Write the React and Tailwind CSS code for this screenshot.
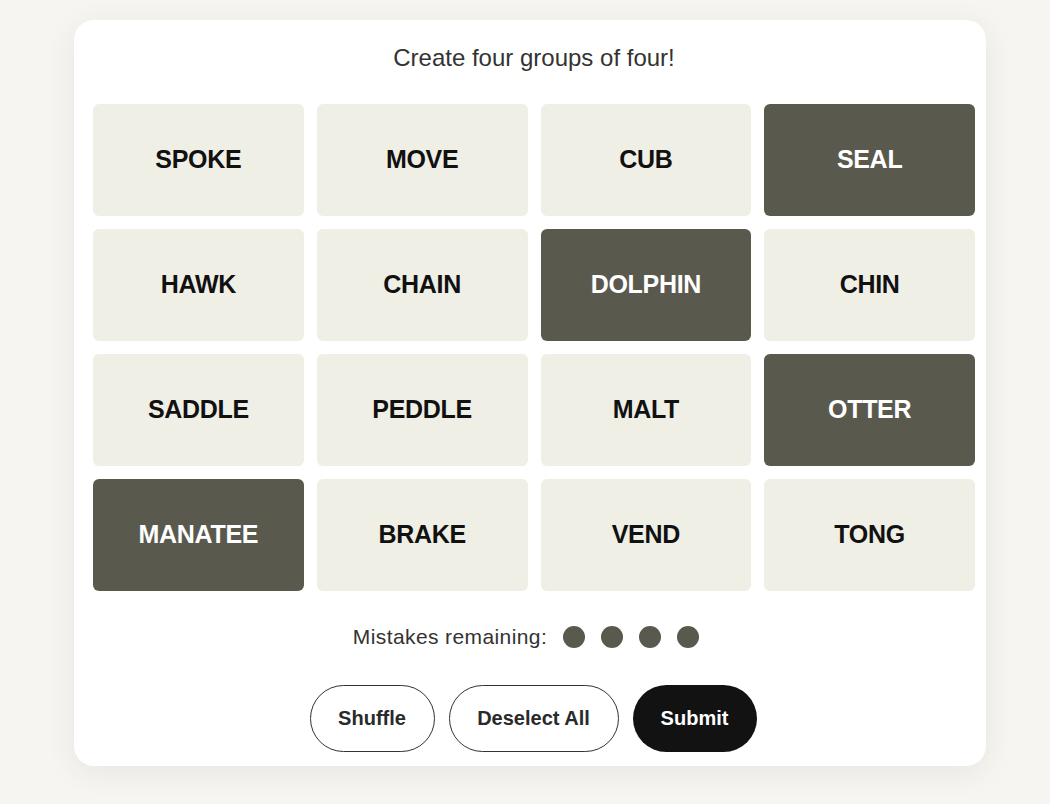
import React, { useState } from 'react';

const words = [
  'SPOKE', 'MOVE', 'CUB', 'SEAL',
  'HAWK', 'CHAIN', 'DOLPHIN', 'CHIN',
  'SADDLE', 'PEDDLE', 'MALT', 'OTTER',
  'MANATEE', 'BRAKE', 'VEND', 'TONG',
];

const App = () => {
  const [selected, setSelected] = useState(['SEAL', 'DOLPHIN', 'OTTER', 'MANATEE']);

  const toggle = (w) => {
    if (selected.includes(w)) setSelected(selected.filter((s) => s !== w));
    else if (selected.length < 4) setSelected([...selected, w]);
  };

  return (
    <div className="min-h-screen bg-[#f6f5f1] pt-[20px] font-['Liberation_Sans',Arial,sans-serif]">
      <div className="ml-[74px] w-[912px] h-[746px] bg-white rounded-[20px] shadow-[0_6px_30px_rgba(60,55,40,0.08)] pt-[24px] px-[19px]">
        {/* Header */}
        <p className="text-center text-[24px] leading-[28px] text-[#333] pl-[8px]">Create four groups of four!</p>

        {/* Grid */}
        <div className="mt-[32px] grid grid-cols-4 gap-x-[13px] gap-y-[13px] w-[882px]">
          {words.map((w) => {
            const on = selected.includes(w);
            return (
              <button
                key={w}
                onClick={() => toggle(w)}
                className={`h-[112px] rounded-[6px] flex items-center justify-center text-[25px] font-bold tracking-[-0.3px] ${
                  on ? 'bg-[#5a594e] text-white' : 'bg-[#efefe6] text-[#111]'
                }`}
              >
                {w}
              </button>
            );
          })}
        </div>

        {/* Mistakes */}
        <div className="mt-[30px] flex items-center justify-center gap-[16px] pr-[8px]">
          <span className="text-[21px] tracking-[0.4px] text-[#333]">Mistakes remaining:</span>
          <div className="flex items-center gap-[16px]">
            <span className="w-[22px] h-[22px] rounded-full bg-[#5a594e]" />
            <span className="w-[22px] h-[22px] rounded-full bg-[#5a594e]" />
            <span className="w-[22px] h-[22px] rounded-full bg-[#5a594e]" />
            <span className="w-[22px] h-[22px] rounded-full bg-[#5a594e]" />
          </div>
        </div>

        {/* Actions */}
        <div className="mt-[32px] flex items-center justify-center gap-[14px] pl-[6px]">
          <button className="w-[125px] h-[67px] rounded-full border border-[#333] text-[20px] font-semibold text-[#2a2a2a]">Shuffle</button>
          <button className="w-[170px] h-[67px] rounded-full border border-[#333] text-[20px] font-semibold text-[#2a2a2a]">Deselect All</button>
          <button className="w-[124px] h-[67px] rounded-full bg-[#121212] text-[20px] font-bold text-white">Submit</button>
        </div>
      </div>
    </div>
  );
};

export default App;
